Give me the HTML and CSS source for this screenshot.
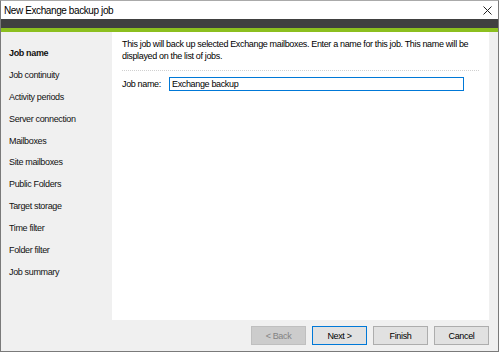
FILE: index.html
```html
<!DOCTYPE html>
<html lang="en">
<head>
    <meta charset="UTF-8">
    <title>New Exchange backup job</title>
    <link rel="stylesheet" href="styles.css">
</head>
<body>
    <div class="window">
        <div class="titlebar">
            <span class="title">New Exchange backup job</span>
            <svg class="close" width="9" height="9" viewBox="0 0 9 9">
                <path d="M0.5 0.5 L8.5 8.5 M8.5 0.5 L0.5 8.5" stroke="#222" stroke-width="1"/>
            </svg>
        </div>
        <div class="darkbar"></div>
        <div class="greenbar"></div>

        <div class="main">
            <ul class="steps">
                <li class="active">Job name</li>
                <li>Job continuity</li>
                <li>Activity periods</li>
                <li>Server connection</li>
                <li>Mailboxes</li>
                <li>Site mailboxes</li>
                <li>Public Folders</li>
                <li>Target storage</li>
                <li>Time filter</li>
                <li>Folder filter</li>
                <li>Job summary</li>
            </ul>
            <div class="page">
                <p class="intro">This job will back up selected Exchange mailboxes. Enter a name for this job. This name will be displayed on the list of jobs.</p>
                <div class="field">
                    <label for="jobname">Job name:</label>
                    <input id="jobname" type="text" value="Exchange backup">
                </div>
            </div>
        </div>

        <div class="footer">
            <button disabled>&lt; Back</button>
            <button class="default">Next &gt;</button>
            <button>Finish</button>
            <button>Cancel</button>
        </div>
    </div>
</body>
</html>
```

FILE: styles.css
```css
body {
    margin: 0;
    padding: 0;
    font-family: "Liberation Sans", Arial, sans-serif;
    font-size: 9px;
    letter-spacing: -0.35px;
    color: #000;
}

.window {
    width: 499px;
    height: 352px;
    box-sizing: border-box;
    border: 1px solid #7a7a7a;
    border-top-color: #aaa;
    display: flex;
    flex-direction: column;
    background-color: #f0f0f0;
}

.titlebar {
    height: 18px;
    background-color: #fff;
    display: flex;
    justify-content: space-between;
    align-items: center;
    padding: 0 6px 0 3px;
}

.title {
    font-size: 10px;
    letter-spacing: -0.4px;
}

.darkbar {
    height: 9px;
    background-color: #404040;
}

.greenbar {
    height: 4px;
    background-color: #8cbf1f;
}

.main {
    flex: 1;
    display: flex;
}

.steps {
    list-style: none;
    margin: 0;
    padding: 10px 0 0 8px;
    width: 103px;
}

.steps li {
    height: 21.9px;
    line-height: 22px;
    color: #111;
}

.steps li.active {
    font-weight: bold;
}

.page {
    flex: 1;
    background-color: #fff;
    margin-right: 9px;
    padding: 6px 10px 0 10px;
}

.intro {
    margin: 0;
    line-height: 12px;
    padding-bottom: 8px;
    border-bottom: 1px dotted #d0d0d0;
}

.field {
    display: flex;
    align-items: center;
    margin-top: 6px;
}

.field label {
    width: 47px;
}

.field input {
    width: 295px;
    height: 14px;
    box-sizing: border-box;
    border: 1px solid #0078d7;
    padding: 0 2px;
    font-family: inherit;
    font-size: 9px;
    letter-spacing: -0.35px;
    outline: none;
}

.footer {
    height: 31px;
    display: flex;
    justify-content: flex-end;
    align-items: center;
    gap: 6px;
    padding-right: 9px;
}

.footer button {
    width: 55px;
    height: 19px;
    background-color: #e1e1e1;
    border: 1px solid #adadad;
    font-family: inherit;
    font-size: 9px;
    letter-spacing: -0.35px;
    color: #000;
    padding: 0;
}

.footer button:disabled {
    background-color: #cccccc;
    border-color: #bfbfbf;
    color: #838383;
}

.footer button.default {
    border-color: #0078d7;
}
```
